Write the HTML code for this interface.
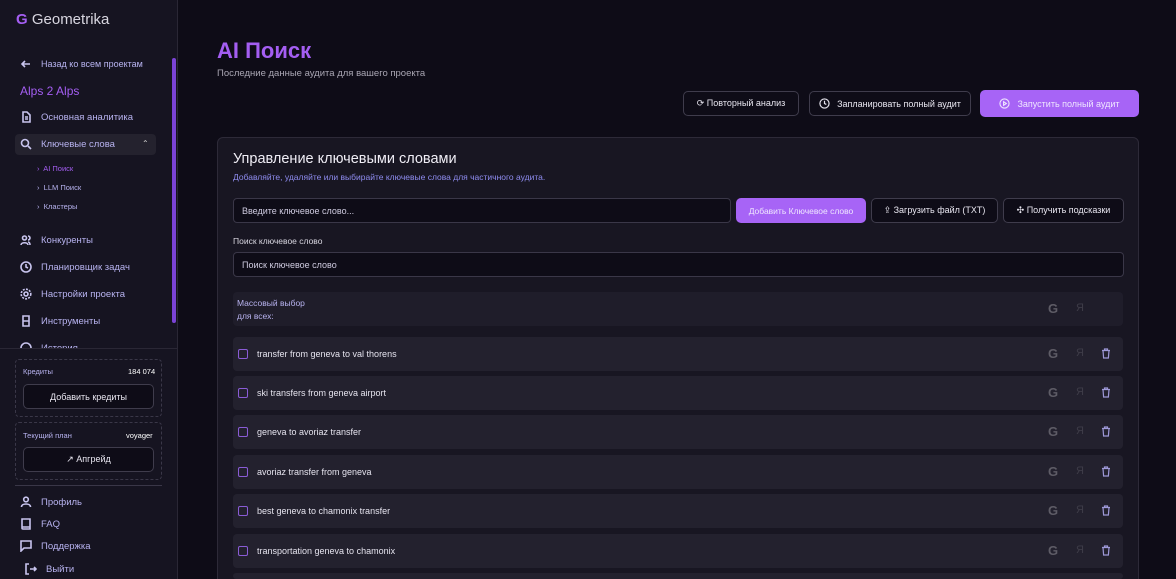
<!DOCTYPE html>
<html style="width:1176px;height:579px;overflow:hidden"><head><meta charset="utf-8"><style>
*{box-sizing:border-box;margin:0;padding:0}
body{width:1176px;height:579px;overflow:hidden;background:#0e0c17;font-family:"Liberation Sans",sans-serif;color:#e8e6f0;position:relative}
.sb{position:absolute;left:0;top:0;width:178px;height:579px;background:#161421;border-right:1px solid #2a2735;overflow:hidden}
.logo{position:absolute;left:16px;top:11px;font-size:15px;color:#d8d6e0}
.logo b{color:#a45ef2;font-weight:700}
.it{position:absolute;left:20px;font-size:9.5px;color:#b8b3f0;display:flex;align-items:center;gap:9px}
.it svg{width:12px;height:12px;stroke:#c8c4ee;fill:none;stroke-width:1.6}
.sub{position:absolute;left:37px;font-size:7.5px;color:#b8b3f0}
.box{position:absolute;left:15px;width:147px;border:1px dashed #3a3748;border-radius:4px}
.btn{position:absolute;border:1px solid #3f3c4c;border-radius:5px;background:#0e0c17;color:#e8e6f0;font-size:9px;display:flex;align-items:center;justify-content:center;gap:7px}
.pb{background:#a764f6;border-color:#a764f6;color:#efe6ff}
.card{position:absolute;left:217px;top:137px;width:922px;height:460px;background:#181622;border:1px solid #2d2a38;border-radius:6px}
.inp{position:absolute;border:1px solid #3a3748;border-radius:4px;background:#0e0c17;font-size:9px;color:#cfcbe0;padding-left:8px;display:flex;align-items:center}
.row{position:absolute;left:233px;width:890px;height:34px;background:#23212e;border-radius:4px;font-size:9px;color:#e5e3ee}
.cb{position:absolute;left:5px;top:12px;width:10px;height:10px;border:1.3px solid #8a5cd6;border-radius:2px}
.row span{position:absolute;left:24px;top:12px}
.g{position:absolute;left:815px;top:9px;font-size:13px;font-weight:700;color:#5e5c66}
.y{position:absolute;left:843px;top:10px;font-size:11px;color:#3e3c48}
.tr{position:absolute;left:868px;top:11px}
</style></head><body>
<div class="sb">
<div class="logo"><b>G</b> Geometrika</div>
<div style="position:absolute;left:172px;top:58px;width:4px;height:265px;background:#7b43d6;border-radius:2px"></div>
<div class="it" style="top:58px"><svg viewBox="0 0 12 12"><path d="M10 6H2M5 3L2 6l3 3"/></svg><span style="font-size:9px">Назад ко всем проектам</span></div>
<div style="position:absolute;left:20px;top:84px;font-size:12px;color:#a45ef2">Alps 2 Alps</div>
<div class="it" style="top:111px"><svg viewBox="0 0 12 12"><path d="M3 1h4l3 3v7H3zM5 6h3M5 8h3"/></svg>Основная аналитика</div>
<div style="position:absolute;left:15px;top:134px;width:141px;height:21px;background:#24222e;border-radius:4px"></div>
<div class="it" style="top:138px"><svg viewBox="0 0 12 12"><circle cx="5" cy="5" r="3.5"/><path d="M8 8l3 3"/></svg>Ключевые слова</div>
<div style="position:absolute;left:142px;top:139px;font-size:8px;color:#ccc">⌃</div>
<div class="sub" style="top:164px;color:#a45ef2">›&nbsp; AI Поиск</div>
<div class="sub" style="top:183px">›&nbsp; LLM Поиск</div>
<div class="sub" style="top:202px">›&nbsp; Кластеры</div>
<div class="it" style="top:234px"><svg viewBox="0 0 12 12"><circle cx="4.5" cy="4" r="2"/><path d="M1 11c0-3 7-3 7 0M8 2a2 2 0 010 4M10 11c0-2-1-3-2-3"/></svg>Конкуренты</div>
<div class="it" style="top:261px"><svg viewBox="0 0 12 12"><circle cx="6" cy="6" r="5"/><path d="M6 3v3l2 1"/></svg>Планировщик задач</div>
<div class="it" style="top:288px"><svg viewBox="0 0 12 12"><circle cx="6" cy="6" r="2"/><circle cx="6" cy="6" r="4.8" stroke-dasharray="2 1.2"/></svg>Настройки проекта</div>
<div class="it" style="top:315px"><svg viewBox="0 0 12 12"><path d="M3 1h6v10H3zM3 6h6"/></svg>Инструменты</div>
<div class="it" style="top:342px"><svg viewBox="0 0 12 12"><circle cx="6" cy="6" r="5"/></svg>История</div>
<div style="position:absolute;left:0;top:348px;width:177px;height:231px;background:#161421;border-top:1px solid #2a2735"></div>
<div class="box" style="top:359px;height:58px"></div>
<div style="position:absolute;left:23px;top:367px;font-size:7.5px;color:#b8b3f0">Кредиты</div>
<div style="position:absolute;left:128px;top:367px;font-size:7.5px;color:#fff">184 074</div>
<div class="btn" style="left:23px;top:384px;width:131px;height:25px">Добавить кредиты</div>
<div class="box" style="top:422px;height:58px"></div>
<div style="position:absolute;left:23px;top:431px;font-size:7.5px;color:#b8b3f0">Текущий план</div>
<div style="position:absolute;left:126px;top:431px;font-size:7.5px;color:#fff">voyager</div>
<div class="btn" style="left:23px;top:447px;width:131px;height:25px">↗ Апгрейд</div>
<div style="position:absolute;left:15px;top:485px;width:147px;height:1px;background:#3a3748"></div>
<div class="it" style="top:496px"><svg viewBox="0 0 12 12"><circle cx="6" cy="3.5" r="2.3"/><path d="M1.5 11c0-4 9-4 9 0"/></svg>Профиль</div>
<div class="it" style="top:518px"><svg viewBox="0 0 12 12"><path d="M2 1h8v10H3a1 1 0 01-1-1zM2 9h8"/></svg>FAQ</div>
<div class="it" style="top:540px"><svg viewBox="0 0 12 12"><path d="M1 1h10v7H4l-3 3z"/></svg>Поддержка</div>
<div class="it" style="top:563px;left:25px"><svg viewBox="0 0 12 12"><path d="M4 1H1v10h3M5 6h6M9 4l2 2-2 2"/></svg>Выйти</div>
</div>

<div style="position:absolute;left:217px;top:38px;font-size:22px;font-weight:700;color:#a45ef2">AI Поиск</div>
<div style="position:absolute;left:217px;top:68px;font-size:9.5px;color:#a9a6b3">Последние данные аудита для вашего проекта</div>
<div class="btn" style="left:683px;top:91px;width:116px;height:25px">⟳ Повторный анализ</div>
<div class="btn" style="left:809px;top:91px;width:162px;height:25px"><svg width="11" height="11" viewBox="0 0 12 12" fill="none" stroke="#e8e6f0" stroke-width="1.3"><circle cx="6" cy="6" r="5"/><path d="M6 3v3l2 1"/></svg>Запланировать полный аудит</div>
<div class="btn pb" style="left:980px;top:90px;width:159px;height:27px"><svg width="11" height="11" viewBox="0 0 12 12" fill="none" stroke="#efe6ff" stroke-width="1.2"><circle cx="6" cy="6" r="5"/><path d="M5 4l3 2-3 2z"/></svg>Запустить полный аудит</div>

<div class="card"></div>
<div style="position:absolute;left:233px;top:151px;font-size:14.5px;color:#f0eef6">Управление ключевыми словами</div>
<div style="position:absolute;left:233px;top:172px;font-size:8.5px;color:#8f8cf0">Добавляйте, удаляйте или выбирайте ключевые слова для частичного аудита.</div>
<div class="inp" style="left:233px;top:198px;width:498px;height:25px">Введите ключевое слово...</div>
<div class="btn pb" style="left:736px;top:198px;width:130px;height:25px;font-size:8.5px">Добавить Ключевое слово</div>
<div class="btn" style="left:871px;top:198px;width:127px;height:25px">⇪ Загрузить файл (TXT)</div>
<div class="btn" style="left:1003px;top:198px;width:121px;height:25px">✣ Получить подсказки</div>
<div style="position:absolute;left:233px;top:236px;font-size:8.5px;color:#d8d6e0">Поиск ключевое слово</div>
<div class="inp" style="left:233px;top:252px;width:891px;height:25px">Поиск ключевое слово</div>

<div class="row" style="top:292px;height:34px;background:#1f1d2a"><div style="position:absolute;left:4px;top:5px;font-size:8.5px;line-height:13px;color:#b8b3f0">Массовый выбор<br>для всех:</div><div class="g">G</div><div class="y">Я</div></div>

<div class="row" style="top:337px"><div class="cb"></div><span>transfer from geneva to val thorens</span><div class="g">G</div><div class="y">Я</div><svg class="tr" width="10" height="11" viewBox="0 0 10 11" fill="none" stroke="#9e99d8" stroke-width="1.2"><path d="M1 2.5h8M3.5 2.5V1h3v1.5M2 2.5l.6 7.5h4.8L8 2.5"/></svg></div>
<div class="row" style="top:376px"><div class="cb"></div><span>ski transfers from geneva airport</span><div class="g">G</div><div class="y">Я</div><svg class="tr" width="10" height="11" viewBox="0 0 10 11" fill="none" stroke="#9e99d8" stroke-width="1.2"><path d="M1 2.5h8M3.5 2.5V1h3v1.5M2 2.5l.6 7.5h4.8L8 2.5"/></svg></div>
<div class="row" style="top:415px"><div class="cb"></div><span>geneva to avoriaz transfer</span><div class="g">G</div><div class="y">Я</div><svg class="tr" width="10" height="11" viewBox="0 0 10 11" fill="none" stroke="#9e99d8" stroke-width="1.2"><path d="M1 2.5h8M3.5 2.5V1h3v1.5M2 2.5l.6 7.5h4.8L8 2.5"/></svg></div>
<div class="row" style="top:455px"><div class="cb"></div><span>avoriaz transfer from geneva</span><div class="g">G</div><div class="y">Я</div><svg class="tr" width="10" height="11" viewBox="0 0 10 11" fill="none" stroke="#9e99d8" stroke-width="1.2"><path d="M1 2.5h8M3.5 2.5V1h3v1.5M2 2.5l.6 7.5h4.8L8 2.5"/></svg></div>
<div class="row" style="top:494px"><div class="cb"></div><span>best geneva to chamonix transfer</span><div class="g">G</div><div class="y">Я</div><svg class="tr" width="10" height="11" viewBox="0 0 10 11" fill="none" stroke="#9e99d8" stroke-width="1.2"><path d="M1 2.5h8M3.5 2.5V1h3v1.5M2 2.5l.6 7.5h4.8L8 2.5"/></svg></div>
<div class="row" style="top:534px"><div class="cb"></div><span>transportation geneva to chamonix</span><div class="g">G</div><div class="y">Я</div><svg class="tr" width="10" height="11" viewBox="0 0 10 11" fill="none" stroke="#9e99d8" stroke-width="1.2"><path d="M1 2.5h8M3.5 2.5V1h3v1.5M2 2.5l.6 7.5h4.8L8 2.5"/></svg></div>
<div class="row" style="top:573px;height:6px"></div>
</body></html>
